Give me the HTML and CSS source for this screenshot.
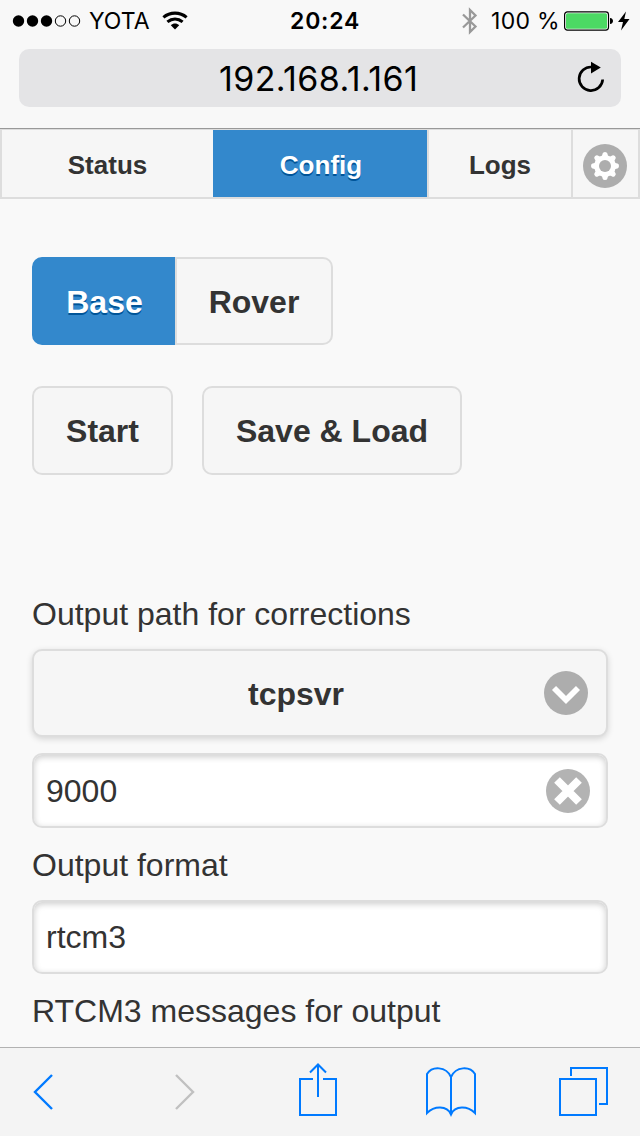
FILE: index.html
```html
<!DOCTYPE html>
<html lang="en">
<head>
<meta charset="utf-8">
<title>192.168.1.161</title>
<link rel="stylesheet" href="styles.css">
</head>
<body>
<div class="screen">
  <header class="browser-top">
    <div class="status-bar">
      <svg class="signal" width="70" height="14" viewBox="0 0 70 14"><g fill="#000"><circle cx="6.500" cy="7" r="5.700"/><circle cx="20.500" cy="7" r="5.700"/><circle cx="34.500" cy="7" r="5.700"/></g><g fill="none" stroke="#000"><circle cx="48.500" cy="7" r="5.200"/><circle cx="62.500" cy="7" r="5.200"/></g></svg>
      <span class="carrier">YOTA</span>
      <svg class="wifi" width="26" height="20" viewBox="0 0 26 20"><path d="M1.400 6.400C8 .7 18 .7 24.600 6.400M5.400 10.900C10 7.200 16 7.200 20.600 10.900" fill="none" stroke="#000" stroke-width="3.100"/><path d="M8.800 14.200C11.300 11.800 14.700 11.800 17.200 14.200L13 18.500z"/></svg>
      <span class="time">20:24</span>
      <svg class="bluetooth" width="18" height="28" viewBox="0 0 18 28"><path d="M2 7.500l12.500 12L9 25V3L14.500 8.500 2 20.500" fill="none" stroke="#999" stroke-width="2.300"/></svg>
      <span class="charge">100 %</span>
      <svg class="battery" width="50" height="20" viewBox="0 0 50 20"><rect x=".6" y=".9" width="43.900" height="18.200" rx="2.800" fill="#fff" stroke="#000" stroke-width="1.200"/><rect x="2" y="2.200" width="41" height="15.600" rx="1.500" fill="#4cd964"/><path d="M46 7c2 0 3 1.500 3 3s-1 3-3 3z"/></svg>
      <svg class="bolt" width="14" height="20" viewBox="0 0 14 20"><path d="M9 .5L1 11h5l-2 8.500L12.500 8H7.300z"/></svg>
    </div>
    <div class="address">
      <span class="url">192.168.1.161</span>
      <svg class="reload" width="30" height="34" viewBox="0 0 30 34"><path d="M26.700 18.500A11.800 11.800 0 1 1 15.500 6" fill="none" stroke="#000" stroke-width="2.700"/><path d="M15 .8l9.800 5.800-9.800 6z"/></svg>
    </div>
  </header>
  <nav class="tabs">
    <a class="tab tab-status">Status</a>
    <a class="tab tab-config">Config</a>
    <a class="tab tab-logs">Logs</a>
    <a class="tab tab-settings">
      <svg width="44" height="44" viewBox="0 0 44 44"><circle cx="22" cy="22" r="22" fill="#adadad"/><g fill="#fff"><circle cx="22" cy="22" r="10.800"/><g id="teeth"><path d="M19.600 9.500Q20 8 22 8t2.400 1.500L25.500 14h-7zM19.600 34.500Q20 36 22 36t2.400-1.500L25.500 30h-7zM9.500 19.600Q8 20 8 22t1.500 2.400L14 25.500v-7zM34.500 19.600Q36 20 36 22t-1.500 2.400L30 25.500v-7z"/></g><use href="#teeth" transform="rotate(45 22 22)"/></g><circle cx="22" cy="22" r="6" fill="#adadad"/></svg>
    </a>
  </nav>
  <main class="content">
    <div class="mode">
      <button class="mode-item selected">Base</button>
      <button class="mode-item">Rover</button>
    </div>
    <div class="actions">
      <button class="button start">Start</button>
      <button class="button save">Save &amp; Load</button>
    </div>
    <form class="fields">
      <div class="label">Output path for corrections</div>
      <div class="select"><span class="select-text">tcpsvr</span>
        <svg width="44" height="44" viewBox="0 0 44 44"><circle cx="22" cy="22" r="22" fill="#adadad"/><path d="M10 17l12 12 12-12" fill="none" stroke="#fff" stroke-width="5.700"/></svg>
      </div>
      <div class="input"><span class="value value-port">9000</span>
        <svg width="44" height="44" viewBox="0 0 44 44"><circle cx="22" cy="22" r="22" fill="#b3b3b3"/><path d="M11 11l22 22M33 11L11 33" fill="none" stroke="#fff" stroke-width="8"/></svg>
      </div>
      <div class="label">Output format</div>
      <div class="input input-format"><span class="value">rtcm3</span></div>
      <div class="label">RTCM3 messages for output</div>
    </form>
  </main>
  <footer class="toolbar">
    <svg class="back" width="24" height="88" viewBox="0 0 24 88"><path d="M20 27L3 44l17 17"/></svg>
    <svg class="forward" width="24" height="88" viewBox="0 0 24 88"><path d="M3 27L20 44 3 61"/></svg>
    <svg class="share" width="40" height="88" viewBox="0 0 40 88"><path d="M15 31H2v36h36V31H25M20 49V16.500M12 24.500l8-8 8 8"/></svg>
    <svg class="book" width="52" height="88" viewBox="0 0 52 88"><path d="M26 67V29C21 18 7 18 2 26v39C9 58 22 57 26 66.500C30 57 43 58 50 65V26C45 18 31 18 26 29"/></svg>
    <svg class="pages" width="52" height="88" viewBox="0 0 52 88"><path d="M2 31h36v36H2zM13 28v-8h36v36h-8"/></svg>
  </footer>
</div>
</body>
</html>
```
FILE: styles.css
```css
* { box-sizing: border-box; }
body { margin: 0; }
svg { display: block; flex: none; }
.screen {
  width: 640px;
  height: 1136px;
  overflow: hidden;
  display: flex;
  flex-direction: column;
  background: #f9f9f9;
  color: #333;
  font-family: "Liberation Sans", Arial, sans-serif;
}
.browser-top {
  height: 129px;
  flex: none;
  background: #f8f8f8;
  border-bottom: 1px solid #999;
  color: #000;
  font-family: Inter, sans-serif;
}
.status-bar {
  height: 49px;
  padding: 0 0 8px 12px;
  display: flex;
  align-items: center;
  font-size: 23px;
  white-space: nowrap;
}
.carrier { width: 80px; padding-left: 7px; }
.time { width: 70px; margin-left: 102px; font-weight: 600; letter-spacing: .8px; }
.bluetooth { margin-left: 101px; }
.charge { width: 74px; margin-left: 11px; padding-left: 1px; letter-spacing: .3px; }
.bolt { margin-left: 3px; }
.address {
  height: 58px;
  margin: 0 19px;
  padding: 0 15px 0 200px;
  display: flex;
  align-items: center;
  justify-content: space-between;
  background: #e4e4e6;
  border-radius: 10px;
  font-size: 34px;
}
.url { letter-spacing: .4px; }
.tabs {
  height: 70px;
  flex: none;
  display: flex;
  background: #f6f6f6;
  border: 2px solid #ddd;
  border-top-width: 1px;
}
.tab {
  display: flex;
  align-items: center;
  justify-content: center;
  padding-top: 3px;
  font-size: 26px;
  font-weight: 700;
}
.tab-status { width: 211px; }
.tab-config {
  width: 214px;
  padding-left: 2px;
  background: #38c;
  color: #fff;
  text-shadow: 0 2px 0 #059;
}
.tab-logs { width: 146px; border: solid #ddd; border-width: 0 2px; }
.tab-settings { width: 65px; padding: 5px 2px 0 0; }
.content { height: 848px; padding: 58px 32px 0; overflow: hidden; }
button {
  margin: 0;
  padding: 2px 0 0;
  border: 2px solid #ddd;
  background: #f6f6f6;
  color: #333;
  font: 700 32px "Liberation Sans", Arial, sans-serif;
}
.mode { display: flex; height: 88px; }
.mode-item { width: 158px; border-radius: 0 10px 10px 0; }
.mode-item.selected {
  width: 143px;
  padding-left: 2px;
  background: #38c;
  border-color: #38c;
  border-radius: 10px 0 0 10px;
  color: #fff;
  text-shadow: 0 2px 0 #059;
}
.actions { display: flex; gap: 29px; height: 89px; margin-top: 41px; }
.button { border-radius: 10px; }
.start { width: 141px; }
.save { width: 260px; }
.fields { margin-top: 119px; font-size: 32px; }
.label { height: 40px; line-height: 40px; margin-bottom: 15px; }
.select, .input {
  display: flex;
  align-items: center;
  justify-content: space-between;
  border: 2px solid #ddd;
  border-radius: 10px;
}
.select {
  height: 88px;
  margin-bottom: 16px;
  padding-right: 18px;
  background: #f6f6f6;
  font-weight: 700;
  box-shadow: 0 2px 6px rgba(0, 0, 0, .15);
}
.select-text { flex: 1; padding: 2px 0 0 14px; text-align: center; }
.input {
  height: 75px;
  margin-bottom: 17px;
  padding: 0 16px 0 12px;
  background: #fff;
  box-shadow: inset 0 2px 6px rgba(0, 0, 0, .2);
}
.value-port { padding-top: 2px; }
.input-format { height: 74px; }
.toolbar {
  height: 89px;
  flex: none;
  display: flex;
  padding-left: 32px;
  border-top: 1px solid #b2b2b2;
  background: #f4f4f4;
}
.toolbar path { fill: none; stroke: #007aff; stroke-width: 2; }
.toolbar .back path { stroke-width: 2.400; }
.toolbar .forward path { stroke: #c0c0c0; stroke-width: 2.400; }
.forward { margin-left: 117px; }
.share { margin-left: 101px; }
.book { margin-left: 87px; }
.pages { margin-left: 81px; }
```
